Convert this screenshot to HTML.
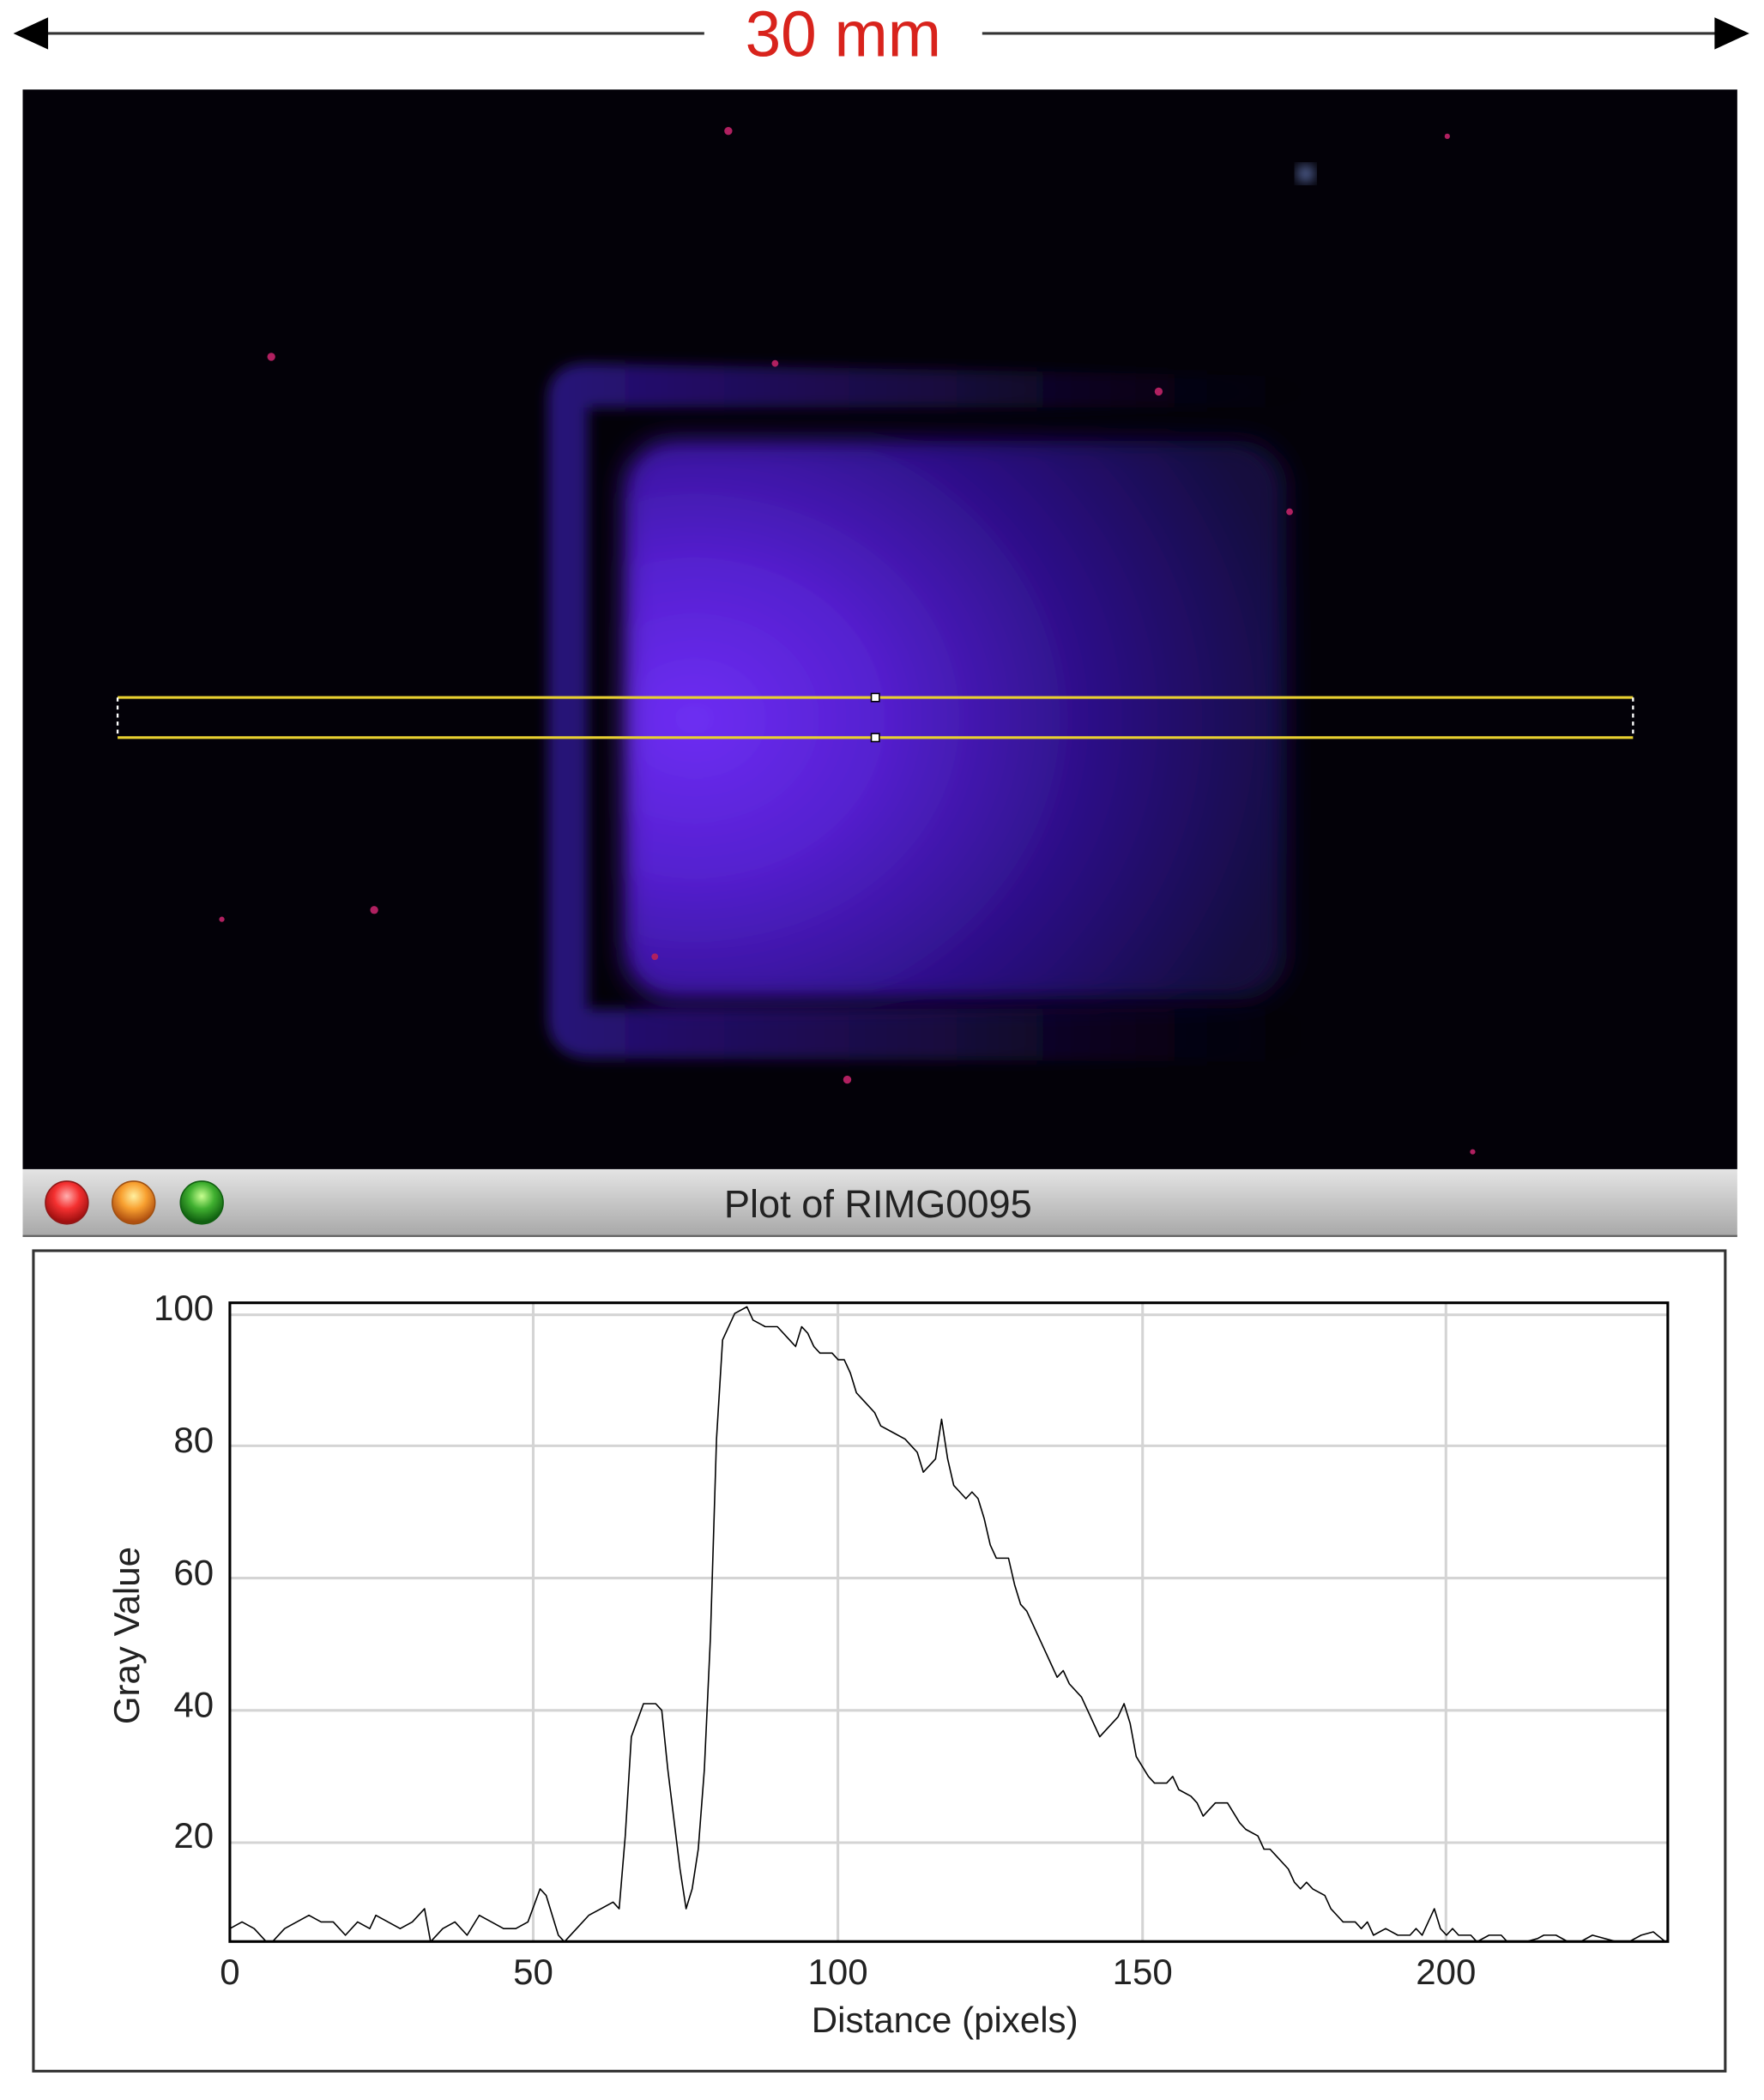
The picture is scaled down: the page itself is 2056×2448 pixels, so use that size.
<!DOCTYPE html>
<html><head><meta charset="utf-8"><style>
html,body{margin:0;padding:0;background:#fff;width:2056px;height:2448px;overflow:hidden}
svg{display:block}
text{font-family:"Liberation Sans",sans-serif}
</style></head><body>
<svg width="2056" height="2448" viewBox="0 0 1320 1571.6" preserveAspectRatio="none" xmlns="http://www.w3.org/2000/svg">
<defs>
<radialGradient id="glow" cx="0.1" cy="0.5" r="0.95">
<stop offset="0" stop-color="#6e2ef4"/>
<stop offset="0.3" stop-color="#5520d0"/>
<stop offset="0.65" stop-color="#2c0f86"/>
<stop offset="1" stop-color="#14073e"/>
</radialGradient>
<linearGradient id="frameg" x1="0" x2="1">
<stop offset="0" stop-color="#3418a0"/>
<stop offset="0.5" stop-color="#221058" stop-opacity="0.9"/>
<stop offset="1" stop-color="#0a0418" stop-opacity="0"/>
</linearGradient>
<linearGradient id="tb" x1="0" y1="0" x2="0" y2="1">
<stop offset="0" stop-color="#e4e4e4"/><stop offset="1" stop-color="#a8a8a8"/>
</linearGradient>
<radialGradient id="rd" cx="0.5" cy="0.35" r="0.6"><stop offset="0" stop-color="#ffb0b0"/><stop offset="0.5" stop-color="#f43030"/><stop offset="1" stop-color="#a01010"/></radialGradient>
<radialGradient id="yl" cx="0.5" cy="0.35" r="0.6"><stop offset="0" stop-color="#fff0a0"/><stop offset="0.5" stop-color="#f8a030"/><stop offset="1" stop-color="#b05010"/></radialGradient>
<radialGradient id="gr" cx="0.5" cy="0.35" r="0.6"><stop offset="0" stop-color="#c8ff90"/><stop offset="0.5" stop-color="#40b030"/><stop offset="1" stop-color="#106010"/></radialGradient>
<filter id="blur" x="-20%" y="-20%" width="140%" height="140%"><feGaussianBlur stdDeviation="10"/></filter>
<filter id="blur2" x="-20%" y="-20%" width="140%" height="140%"><feGaussianBlur stdDeviation="5"/></filter>
<clipPath id="pc"><rect x="172" y="975" width="1076" height="478"/></clipPath>
</defs>

<!-- scale arrow -->
<line x1="30" y1="25" x2="527" y2="25" stroke="#333" stroke-width="2"/>
<line x1="735" y1="25" x2="1290" y2="25" stroke="#333" stroke-width="2"/>
<polygon points="10,25 36,13 36,37" fill="#000"/>
<polygon points="1309,25 1283,13 1283,37" fill="#000"/>
<text x="631" y="42" font-size="48" fill="#d8231c" text-anchor="middle">30 mm</text>

<!-- image -->
<rect x="17" y="67" width="1283" height="808" fill="#030108"/>
<g filter="url(#blur2)">
<path d="M440,272 L1000,282 L1000,795 L440,792 Q410,790 410,760 L410,300 Q410,272 440,272 Z M440,305 L440,755 L985,755 L985,305 Z" fill="url(#frameg)" fill-rule="evenodd" opacity="0.75"/>
</g>
<rect x="468" y="330" width="495" height="418" rx="35" fill="url(#glow)" filter="url(#blur)"/>
<rect x="472" y="335" width="480" height="405" rx="35" fill="url(#glow)" opacity="0.5" filter="url(#blur2)"/>
<g fill="#b02060">
<circle cx="545" cy="98" r="3"/><circle cx="203" cy="267" r="3"/><circle cx="867" cy="293" r="3"/><circle cx="580" cy="272" r="2.5"/><circle cx="965" cy="383" r="2.5"/><circle cx="280" cy="681" r="3"/><circle cx="166" cy="688" r="2"/><circle cx="634" cy="808" r="3"/><circle cx="490" cy="716" r="2.5"/><circle cx="1083" cy="102" r="2"/><circle cx="1102" cy="862" r="2"/>
</g>
<circle cx="977" cy="130" r="6" fill="#6a80c0" filter="url(#blur2)"/>

<!-- yellow selection -->
<line x1="88" y1="522" x2="1222" y2="522" stroke="#e8d030" stroke-width="2"/>
<line x1="88" y1="552" x2="1222" y2="552" stroke="#e8d030" stroke-width="2"/>
<line x1="88" y1="522" x2="88" y2="552" stroke="#fff" stroke-width="1.5" stroke-dasharray="3,3"/>
<line x1="1222" y1="522" x2="1222" y2="552" stroke="#fff" stroke-width="1.5" stroke-dasharray="3,3"/>
<rect x="652" y="519" width="6" height="6" fill="#fff" stroke="#000"/>
<rect x="652" y="549" width="6" height="6" fill="#fff" stroke="#000"/>

<!-- title bar -->
<rect x="17" y="875" width="1283" height="50" fill="url(#tb)"/>
<line x1="17" y1="925" x2="1300" y2="925" stroke="#666" stroke-width="1.5"/>
<circle cx="50" cy="900" r="16" fill="url(#rd)" stroke="#901818" stroke-width="1"/>
<circle cx="100" cy="900" r="16" fill="url(#yl)" stroke="#a05010" stroke-width="1"/>
<circle cx="151" cy="900" r="16" fill="url(#gr)" stroke="#106010" stroke-width="1"/>
<text x="657" y="911" font-size="29" fill="#222" text-anchor="middle">Plot of RIMG0095</text>

<!-- plot box -->
<rect x="25" y="936" width="1266" height="614" fill="#fff" stroke="#333" stroke-width="2"/>
<g stroke="#d4d4d4" stroke-width="2">
<line x1="172" y1="984" x2="1248" y2="984"/>
<line x1="172" y1="1082" x2="1248" y2="1082"/>
<line x1="172" y1="1181" x2="1248" y2="1181"/>
<line x1="172" y1="1280" x2="1248" y2="1280"/>
<line x1="172" y1="1379" x2="1248" y2="1379"/>
<line x1="399" y1="975" x2="399" y2="1453"/>
<line x1="627" y1="975" x2="627" y2="1453"/>
<line x1="855" y1="975" x2="855" y2="1453"/>
<line x1="1082" y1="975" x2="1082" y2="1453"/>
</g>
<g clip-path="url(#pc)">
<g transform="translate(172,1473) scale(4.552,-4.95)">
<polyline vector-effect="non-scaling-stroke" fill="none" stroke="#000" stroke-width="1.6" stroke-linejoin="round" points="0,6 2,7 4,6 6,4 7,4 9,6 11,7 13,8 15,7 17,7 19,5 21,7 23,6 24,8 26,7 28,6 30,7 32,9 33,4 35,6 37,7 39,5 41,8 43,7 45,6 47,6 49,7 51,12 52,11 54,5 55,4 57,6 59,8 61,9 63,10 64,9 65,20 66,35 68,40 70,40 71,39 72,30 74,15 75,9 76,12 77,18 78,30 79,50 80,80 81,95 83,99 85,100 86,98 88,97 90,97 92,95 93,94 94,97 95,96 96,94 97,93 99,93 100,92 101,92 102,90 103,87 104,86 106,84 107,82 109,81 111,80 112,79 113,78 114,75 115,76 116,77 117,83 118,77 119,73 120,72 121,71 122,72 123,71 124,68 125,64 126,62 128,62 129,58 130,55 131,54 132,52 134,48 135,46 136,44 137,45 138,43 140,41 141,39 142,37 143,35 144,36 146,38 147,40 148,37 149,32 151,29 152,28 154,28 155,29 156,27 158,26 159,25 160,23 162,25 164,25 166,22 167,21 169,20 170,18 171,18 172,17 174,15 175,13 176,12 177,13 178,12 180,11 181,9 182,8 183,7 185,7 186,6 187,7 188,5 190,6 192,5 194,5 195,6 196,5 198,9 199,6 200,5 201,6 202,5 204,5 205,4 207,5 209,5 210,4 213,4 215,4.5 216,5 218,5 220,4 222,4 224,5 226,4.5 228,4 230,4 232,5 234,5.5 236,4"/>
</g>
</g>
<rect x="172" y="975" width="1076" height="478" fill="none" stroke="#000" stroke-width="2"/>
<g font-size="27" fill="#222" text-anchor="end">
<text x="160" y="988">100</text><text x="160" y="1087">80</text><text x="160" y="1186">60</text><text x="160" y="1285">40</text><text x="160" y="1383">20</text>
</g>
<g font-size="27" fill="#222" text-anchor="middle">
<text x="172" y="1485">0</text><text x="399" y="1485">50</text><text x="627" y="1485">100</text><text x="855" y="1485">150</text><text x="1082" y="1485">200</text>
<text x="707" y="1521">Distance (pixels)</text>
<text x="95" y="1224" transform="rotate(-90 95 1224)" dy="9">Gray Value</text>
</g>
</svg>
</body></html>
